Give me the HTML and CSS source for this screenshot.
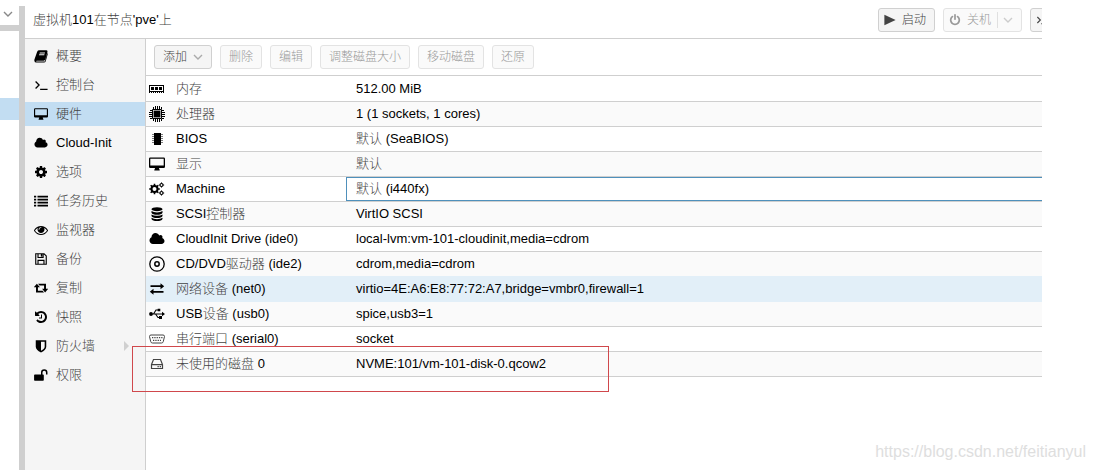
FILE: index.html
```html
<!DOCTYPE html>
<html lang="zh-CN">
<head>
<meta charset="utf-8">
<title>虚拟机 101</title>
<link rel="stylesheet" href="styles.css">
</head>
<body>
<svg class="sprite" aria-hidden="true">
  <symbol id="book" viewBox="0 0 16 16"><path fill-rule="evenodd" d="M6 1.500h8.300q1.500.3 1.100 1.800L12.900 12q-.4 1.300-1.800 1.300H3.300q-.8 0-.9.500 0 .6.9.600h8.600q.5 0 .7-.6L15.300 4.500q.7.600.4 1.600L13.400 14q-.5 1.500-2 1.500H2.800Q.6 15.500.4 13.300q-.1-.8.300-1.800L3.600 3Q4.300 1.500 6 1.500zM6.600 4l-.3 1h6l.3-1zM6 6l-.3 1h6l.3-1z"/></symbol>
  <symbol id="terminal" viewBox="0 0 16 16"><path d="M1.800 4l4 4-4 4M7 13h8.500" fill="none" stroke="currentColor" stroke-width="1.500"/></symbol>
  <symbol id="desktop" viewBox="0 0 16 16"><path fill-rule="evenodd" d="M1.300 1.500h13.400q1.300 0 1.300 1.300v8q0 1.300-1.300 1.300H10q0 1 .7 1.600v.8H5.300v-.8q.7-.6.700-1.600H1.300Q0 12.100 0 10.800v-8q0-1.300 1.300-1.300zm0 1.200v6.800h13.400V2.700z"/></symbol>
  <symbol id="cloud" viewBox="0 0 2048 1792"><path d="M1984 1152q0 159-112.500 271.500t-271.500 112.500h-1088q-185 0-316.500-131.500t-131.500-316.500q0-132 71-241.500t187-163.500q-2-28-2-43 0-212 150-362t362-150q158 0 286.500 88t187.500 230q70-62 166-62 106 0 181 75t75 181q0 75-41 138 129 30 213 134.500t84 239.500z"/></symbol>
  <symbol id="cog" viewBox="0 0 1792 1792"><path d="M1152 896q0-106-75-181t-181-75-181 75-75 181 75 181 181 75 181-75 75-181zm512-109v222q0 12-8 23t-20 13l-185 28q-19 54-39 91 35 50 107 138 10 12 10 25t-9 23q-27 37-99 108t-94 71q-12 0-26-9l-138-108q-44 23-91 38-16 136-29 186-7 28-36 28h-222q-14 0-24.500-8.500t-11.500-21.500l-28-184q-49-16-90-37l-141 107q-10 9-25 9-14 0-25-11-126-114-165-168-7-10-7-23 0-12 8-23 15-21 51-66.500t54-70.500q-27-50-41-99l-183-27q-13-2-21-12.500t-8-23.500v-222q0-12 8-23t19-13l186-28q14-46 39-92-40-57-107-138-10-12-10-24 0-10 9-23 26-36 98.500-107.500t94.500-71.500q13 0 26 10l138 107q44-23 91-38 16-136 29-186 7-28 36-28h222q14 0 24.500 8.500t11.500 21.500l28 184q49 16 90 37l142-107q9-9 24-9 13 0 25 10 129 119 165 170 7 8 7 22 0 12-8 23-15 21-51 66.500t-54 70.500q26 50 41 98l183 28q13 2 21 12.500t8 23.500z"/></symbol>
  <symbol id="list" viewBox="0 0 16 16"><path d="M0 2h2.500v2H0zm4 0h12v2H4zM0 5.400h2.500v2H0zm4 0h12v2H4zM0 8.800h2.500v2H0zm4 0h12v2H4zm-4 3.400h2.500v2H0zm4 0h12v2H4z"/></symbol>
  <symbol id="eye" viewBox="0 0 1792 1792"><path d="M1664 960q-152-236-381-353 61 104 61 225 0 185-131.500 316.500t-316.500 131.500-316.500-131.500-131.500-316.500q0-121 61-225-229 117-381 353 133 205 333.500 326.500t434.500 121.500 434.500-121.500 333.500-326.500zm-720-384q0-20-14-34t-34-14q-125 0-214.500 89.500t-89.500 214.500q0 20 14 34t34 14 34-14 14-34q0-86 61-147t147-61q20 0 34-14t14-34zm848 384q0 34-20 69-140 230-376.500 368.500t-499.500 138.500-499.500-139-376.500-368q-20-35-20-69t20-69q140-229 376.500-368t499.500-139 499.500 139 376.500 368q20 35 20 69z"/></symbol>
  <symbol id="save" viewBox="0 0 16 16"><path fill="none" stroke="currentColor" stroke-width="1.300" d="M2 2h9.500L14 4.500V14H2zM4.600 14V9.500h6.800V14M4.600 2v4.300h5.800V2"/><path d="M7.800 2.300h1.800v3H7.800z"/></symbol>
  <symbol id="retweet" viewBox="0 0 16 16"><path d="M3.300 3l3.500 4.200H4.500v3.900h5.300l1.700 2H2.300V7.200H-.2zM4.600 3h9.100v5.900h2.500l-3.500 4.200-3.500-4.200h2.300V5H6.300z"/></symbol>
  <symbol id="history" viewBox="0 0 1792 1792"><path d="M1664 896q0 156-61 298t-164 245-245 164-298 61q-172 0-327-72.500t-264-204.500q-7-10-6.500-22.500t8.500-20.500l137-138q10-9 25-9 16 2 23 12 73 95 179 147t225 52q104 0 198.500-40.500t163.500-109.500 109.500-163.500 40.500-198.500-40.500-198.500-109.500-163.500-163.500-109.500-198.500-40.500q-98 0-188 35.500t-160 101.500l137 138q31 30 14 69-17 40-59 40h-448q-26 0-45-19t-19-45v-448q0-42 40-59 39-17 69 14l130 129q107-101 244.500-156.500t284.500-55.500q156 0 298 61t245 164 164 245 61 298zm-640-288v448q0 14-9 23t-23 9h-320q-14 0-23-9t-9-23v-64q0-14 9-23t23-9h224v-352q0-14 9-23t23-9h64q14 0 23 9t9 23z"/></symbol>
  <symbol id="shield" viewBox="0 0 16 16"><path fill-rule="evenodd" d="M2 1.500h12v7.300q0 3.700-6 6.500-6-2.800-6-6.500zM8 3v10.300q4.200-2.100 4.200-4.500V3z"/></symbol>
  <symbol id="unlock" viewBox="0 0 16 16"><path d="M1 7.500h7V5.200a3.700 3.700 0 0 1 7.400 0v2.300h-1.700V5.200a2 2 0 0 0-4 0v2.300h.6q.9 0 .9.900v5.200q0 .9-.9.900H1q-.9 0-.9-.9V8.400q0-.9.900-.9z"/></symbol>
  <symbol id="play" viewBox="0 0 16 16"><path d="M.5 1L15.500 8 .5 15z"/></symbol>
  <symbol id="power" viewBox="0 0 1792 1792"><path d="M1664 896q0 156-61 298t-164 245-245 164-298 61-298-61-245-164-164-245-61-298q0-182 80.500-343t226.500-270q43-32 95.500-25t83.500 50q32 42 24.500 94.500t-49.500 84.500q-98 74-151.500 181t-53.500 228q0 104 40.500 198.500t109.500 163.500 163.500 109.500 198.500 40.500 198.500-40.500 163.500-109.500 109.500-163.500 40.500-198.500q0-121-53.500-228t-151.500-181q-42-32-49.500-84.500t24.500-94.500q31-43 84-50t95 25q146 109 226.500 270t80.500 343zm-640-768v640q0 52-38 90t-90 38-90-38-38-90v-640q0-52 38-90t90-38 90 38 38 90z"/></symbol>
  <symbol id="chevron" viewBox="0 0 10 10"><path d="M1 3l4 4 4-4" fill="none" stroke="currentColor" stroke-width="1.400"/></symbol>
  <symbol id="memory" viewBox="0 0 16 16"><path fill-rule="evenodd" d="M0 4h15v8h-1v-1h-1v1h-1v-1h-1v1h-1v-1H9v1H8v-1H7v1H6v-1H5v1H4v-1H3v1H2v-1H1v1H0zm1 1v5h13V5z"/><path d="M2 6h3v3H2zm4 0h3v3H6zm4 0h3v3h-3z"/></symbol>
  <symbol id="cpu" viewBox="0 0 16 16"><path fill="none" stroke="currentColor" d="M3.500 3.500h9v9h-9zM4.500 1v2M6.500 0v3M8.500 0v3M10.500 0v3M12.500 1v2M4.500 13v2M6.500 13v3M8.500 13v3M10.500 13v3M12.500 13v2M1 4.500h2M0 6.500h3M0 8.500h3M0 10.500h3M1 12.500h2M13 4.500h2M13 6.500h3M13 8.500h3M13 10.500h3M13 12.500h2"/><path d="M4.600 4.600h6.800v6.800H4.600z"/></symbol>
  <symbol id="chip" viewBox="0 0 16 16"><path d="M5 2h7v12H5z"/><path stroke="currentColor" stroke-opacity=".5" d="M3 3.500h11M3 5.500h11M3 7.500h11M3 9.500h11M3 11.500h11"/></symbol>
  <symbol id="cogs" viewBox="0 0 16 16"><circle cx="5.500" cy="8" r="3" fill="none" stroke="currentColor" stroke-width="2"/><path fill="none" stroke="currentColor" stroke-width="1.600" d="M5.500 2.700v2M5.500 11.300v2M.2 8h2M8.800 8h2M1.700 4.200l1.500 1.500M7.800 10.300l1.500 1.500M1.700 11.800l1.500-1.500M7.800 5.700l1.500-1.500"/><g fill="none" stroke="currentColor" stroke-width=".8"><circle cx="12.500" cy="4" r="1.500" stroke-width="1.200"/><circle cx="12.500" cy="12" r="1.500" stroke-width="1.200"/><path d="M12.500 1.300v1.200M12.500 5.500v1.200M9.800 4H11M14 4h1.200M12.500 9.300v1.200M12.500 13.500v1.200M9.800 12H11M14 12h1.200"/></g></symbol>
  <symbol id="database" viewBox="0 0 16 16"><ellipse cx="8" cy="3.200" rx="5.500" ry="2"/><path d="M2.500 5q2 1.400 5.500 1.400T13.500 5v1.700q-1 2-5.500 2t-5.500-2zM2.500 8.400q2 1.400 5.500 1.400t5.500-1.400v1.700q-1 2-5.500 2t-5.500-2zM2.500 11.800q2 1.400 5.500 1.400t5.500-1.400v1.200q-1 2-5.500 2t-5.500-2z"/></symbol>
  <symbol id="disc" viewBox="0 0 16 16"><circle cx="8" cy="8" r="7.200" fill="none" stroke="currentColor" stroke-width="1.300"/><circle cx="8" cy="8" r="2.200" fill="none" stroke="currentColor" stroke-width="1.500"/></symbol>
  <symbol id="exchange" viewBox="0 0 16 16"><path d="M1.500 4.300h10V2.200L15.200 5.200l-3.700 3V6.100h-10zM14.500 9.900h-10V7.800L.8 10.800l3.700 3v-2.100h10z"/></symbol>
  <symbol id="usb" viewBox="0 0 16 16"><circle cx="2" cy="8" r="1.900"/><path d="M13 5.800L16 8l-3 2.200zM8.700 2.800h2.600v2.400H8.700zM10 10h3v3h-3z"/><path fill="none" stroke="currentColor" stroke-width="1.100" d="M2 8h12M4.500 8L7 4h2M6.500 8L9 11.500h2"/></symbol>
  <symbol id="serial" viewBox="0 0 16 16"><path fill="none" stroke="currentColor" d="M2 4h12q1.500 0 1.500 1.500l-1.200 5Q14 12 12.500 12h-9Q2 12 1.700 10.500L.5 5.500Q.5 4 2 4z"/><path stroke="currentColor" stroke-width="1.300" stroke-dasharray="1.300 1" d="M3 6.700h10.500M4 9.300h8"/></symbol>
  <symbol id="hdd" viewBox="0 0 16 16"><path fill="none" stroke="currentColor" stroke-width="1.200" d="M2.500 8.500l2-5h7l2 5v4h-11zM2.500 8.600h11"/><path d="M8.500 10h1.300v1.300H8.500zm2.200 0H12v1.300h-1.300z"/></symbol>
</svg>

<div class="app">
  <aside class="tree">
    <button class="tree-toggle" aria-label="视图"><svg><use href="#chevron"/></svg></button>
    <div class="tree-list"><div class="tree-selected"></div></div>
  </aside>

  <main class="panel">
    <header class="header">
      <h1><span class="zh">虚拟机</span>101<span class="zh">在节点</span>'pve'<span class="zh">上</span></h1>
      <button class="btn"><svg><use href="#play"/></svg>启动</button>
      <button class="btn split" disabled><svg><use href="#power"/></svg>关机<span class="arrow"><svg class="caret"><use href="#chevron"/></svg></span></button>
      <button class="btn console" aria-label="控制台"><svg><use href="#terminal"/></svg></button>
    </header>

    <div class="body">
      <nav class="nav">
        <a href="#"><svg><use href="#book"/></svg><span class="zh">概要</span></a>
        <a href="#"><svg><use href="#terminal"/></svg><span class="zh">控制台</span></a>
        <a href="#" class="active"><svg><use href="#desktop"/></svg><span class="zh">硬件</span></a>
        <a href="#"><svg><use href="#cloud"/></svg>Cloud-Init</a>
        <a href="#"><svg><use href="#cog"/></svg><span class="zh">选项</span></a>
        <a href="#"><svg><use href="#list"/></svg><span class="zh">任务历史</span></a>
        <a href="#"><svg><use href="#eye"/></svg><span class="zh">监视器</span></a>
        <a href="#"><svg><use href="#save"/></svg><span class="zh">备份</span></a>
        <a href="#"><svg><use href="#retweet"/></svg><span class="zh">复制</span></a>
        <a href="#"><svg><use href="#history"/></svg><span class="zh">快照</span></a>
        <a href="#" class="has-children"><svg><use href="#shield"/></svg><span class="zh">防火墙</span></a>
        <a href="#"><svg><use href="#unlock"/></svg><span class="zh">权限</span></a>
      </nav>

      <section class="content">
        <div class="toolbar">
          <button class="btn">添加<svg class="caret"><use href="#chevron"/></svg></button>
          <button class="btn" disabled>删除</button>
          <button class="btn" disabled>编辑</button>
          <button class="btn" disabled>调整磁盘大小</button>
          <button class="btn" disabled>移动磁盘</button>
          <button class="btn" disabled>还原</button>
        </div>
        <table class="grid">
          <colgroup><col class="col-icon"><col class="col-name"><col></colgroup>
          <tbody>
            <tr><td><svg><use href="#memory"/></svg></td><td><span class="zh">内存</span></td><td>512.00 MiB</td></tr>
            <tr><td><svg><use href="#cpu"/></svg></td><td><span class="zh">处理器</span></td><td>1 (1 sockets, 1 cores)</td></tr>
            <tr><td><svg><use href="#chip"/></svg></td><td>BIOS</td><td><span class="zh">默认</span> (SeaBIOS)</td></tr>
            <tr><td><svg><use href="#desktop"/></svg></td><td><span class="zh">显示</span></td><td><span class="zh">默认</span></td></tr>
            <tr><td><svg><use href="#cogs"/></svg></td><td>Machine</td><td class="focused"><span class="zh">默认</span> (i440fx)</td></tr>
            <tr><td><svg><use href="#database"/></svg></td><td>SCSI<span class="zh">控制器</span></td><td>VirtIO SCSI</td></tr>
            <tr><td><svg><use href="#cloud"/></svg></td><td>CloudInit Drive (ide0)</td><td>local-lvm:vm-101-cloudinit,media=cdrom</td></tr>
            <tr class="before-hover"><td><svg><use href="#disc"/></svg></td><td>CD/DVD<span class="zh">驱动器</span> (ide2)</td><td>cdrom,media=cdrom</td></tr>
            <tr class="hover"><td><svg><use href="#exchange"/></svg></td><td><span class="zh">网络设备</span> (net0)</td><td>virtio=4E:A6:E8:77:72:A7,bridge=vmbr0,firewall=1</td></tr>
            <tr><td><svg><use href="#usb"/></svg></td><td>USB<span class="zh">设备</span> (usb0)</td><td>spice,usb3=1</td></tr>
            <tr><td><svg class="thin"><use href="#serial"/></svg></td><td><span class="zh">串行端口</span> (serial0)</td><td>socket</td></tr>
            <tr><td><svg class="thin"><use href="#hdd"/></svg></td><td><span class="zh">未使用的磁盘</span> 0</td><td>NVME:101/vm-101-disk-0.qcow2</td></tr>
          </tbody>
        </table>
      </section>
    </div>
  </main>
  <div class="annotation"></div>
  <div class="watermark">https://blog.csdn.net/feitianyul</div>
</div>
</body>
</html>
```

FILE: styles.css
```css
* { box-sizing: border-box; }

body {
  margin: 0;
  background: #fff;
  color: #000;
  font: 13px/24px "Liberation Sans", "Noto Sans CJK SC", sans-serif;
}

.sprite { display: none; }

svg {
  width: 14px;
  height: 14px;
  flex: none;
  fill: currentColor;
}

.zh {
  color: #444;
  font-weight: 300;
}

.app {
  position: relative;
  display: flex;
  min-height: 100vh;
  padding: 6px 52px 0 0;
  overflow: hidden;
}

/* resource tree edge */
.tree {
  display: flex;
  flex-direction: column;
  width: 25px;
  flex: none;
  border-right: 6px solid #cfcfcf;
}

.tree-toggle {
  display: flex;
  align-items: center;
  justify-content: center;
  height: 19px;
  padding: 0 3px 4px 0;
  border: 0;
  background: #fff;
  color: #888;
}

.tree-toggle svg { width: 10px; height: 10px; }

.tree-list {
  flex: 1;
  padding-top: 67px;
  border-top: 6px solid #cfcfcf;
}

.tree-selected {
  height: 22px;
  background: #c2ddf2;
}

/* main panel */
.panel {
  display: flex;
  flex-direction: column;
  flex: 1;
  min-width: 0;
}

.header {
  display: flex;
  align-items: center;
  gap: 8px;
  height: 33px;
  padding: 0 0 4px 8px;
  border-bottom: 1px solid #cfcfcf;
  overflow: hidden;
}

.header h1 {
  flex: 1;
  margin: 0;
  font-size: 13px;
  font-weight: 400;
  line-height: 26px;
}

.btn {
  display: flex;
  align-items: center;
  gap: 6px;
  height: 24px;
  padding: 0 8px;
  border: 1px solid #d0d0d0;
  border-radius: 3px;
  background: #f5f5f5;
  color: #444;
  font: 300 12px/22px "Liberation Sans", "Noto Sans CJK SC", sans-serif;
  white-space: nowrap;
}

.btn:disabled {
  border-color: #e3e3e3;
  background: #fafafa;
  color: #999;
}

.header .btn { padding: 0 8px 0 5px; }

.btn svg { width: 12px; height: 12px; }

.btn .caret {
  width: 10px;
  height: 10px;
  color: #aaa;
}

.btn:disabled .caret { color: #ccc; }

.btn .arrow {
  display: flex;
  align-items: center;
  height: 16px;
  padding-left: 5px;
  border-left: 1px solid #e0e0e0;
}

.header .console {
  width: 84px;
  margin-right: -72px;
}

.body {
  display: flex;
  flex: 1;
}

.nav {
  display: flex;
  flex-direction: column;
  gap: 5px;
  width: 121px;
  flex: none;
  padding-top: 5px;
  border-right: 1px solid #cfcfcf;
  background: #f5f5f5;
}

.nav a {
  display: flex;
  align-items: center;
  gap: 8px;
  height: 24px;
  padding: 0 16px 0 9px;
  color: #000;
  text-decoration: none;
}

.nav .active { background: #c2ddf2; }

.has-children::after {
  content: "";
  margin-left: auto;
  border: 5px solid transparent;
  border-left-color: #d0d0d0;
  border-right-width: 0;
}

.content {
  flex: 1;
  min-width: 0;
}

.toolbar {
  display: flex;
  gap: 8px;
  height: 37px;
  padding: 6px 8px;
  border-bottom: 1px solid #cfcfcf;
}

/* hardware table */
.grid {
  width: 100%;
  margin-top: 1px;
  table-layout: fixed;
  border-spacing: 0;
}

.col-icon { width: 20px; }
.col-name { width: 180px; }

.grid td {
  height: 25px;
  padding: 0 10px;
  border-bottom: 1px solid #cfcfcf;
  line-height: 24px;
  white-space: nowrap;
}

.grid td:first-child { padding: 0 0 0 3px; }

.grid svg {
  display: block;
  width: 16px;
  height: 16px;
}

.grid .thin { color: #444; }

.grid tr:nth-child(even) { background: #fafafa; }

.grid .hover { background: #e2eff8; }
.grid .hover td,
.grid .before-hover td { border-bottom-color: #e2eff8; }

.grid .focused {
  box-shadow: inset 1px 1px #4f90bb, inset 0 -1px #4f90bb;
}

/* overlays on top of the page */
.annotation {
  position: absolute;
  top: 346px;
  left: 132px;
  width: 477px;
  height: 46px;
  border: 1px solid #d0484c;
}

.watermark {
  position: absolute;
  right: 8px;
  bottom: 6px;
  color: #dedede;
  font-size: 16px;
}
```
